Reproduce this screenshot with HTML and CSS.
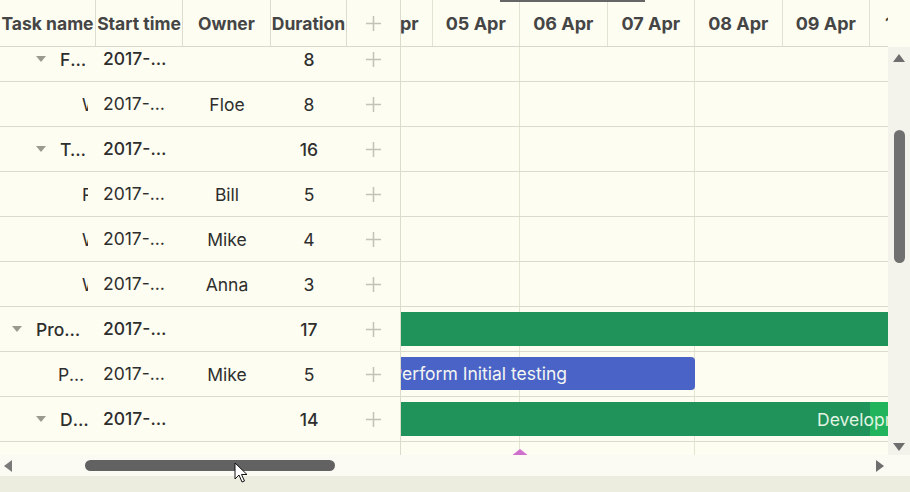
FILE: index.html
```html
<!DOCTYPE html>
<html lang="en">
<head>
    <meta charset="UTF-8">
    <meta name="viewport" content="width=device-width, initial-scale=1.0">
    <title>Gantt</title>
    <link rel="stylesheet" href="styles.css">
</head>
<body>
    <div class="gantt">
        <div class="main">
            <div class="grid">
                <div class="grid-head">
                    <div class="hcell">Task name</div>
                    <div class="hcell">Start time</div>
                    <div class="hcell">Owner</div>
                    <div class="hcell">Duration</div>
                    <div class="hcell add"><svg class="plus" viewBox="0 0 18 18"><path d="M9 1v16M1 9h16"/></svg></div>
                </div>
                <div class="grid-body">
                    <div class="rows">
                        <div class="row parent">
                            <div class="cell name lvl1"><span class="caret"></span><span class="txt">Finalize</span></div>
                            <div class="cell start">2017-04-02</div>
                            <div class="cell owner"></div>
                            <div class="cell dur">8</div>
                            <div class="cell add"><svg class="plus" viewBox="0 0 18 18"><path d="M9 1v16M1 9h16"/></svg></div>
                        </div>
                        <div class="row">
                            <div class="cell name lvl2 clip"><span class="leaf"></span><span class="txt">Write docs</span></div>
                            <div class="cell start">2017-04-02</div>
                            <div class="cell owner">Floe</div>
                            <div class="cell dur">8</div>
                            <div class="cell add"><svg class="plus" viewBox="0 0 18 18"><path d="M9 1v16M1 9h16"/></svg></div>
                        </div>
                        <div class="row parent">
                            <div class="cell name lvl1"><span class="caret"></span><span class="txt">Testing</span></div>
                            <div class="cell start">2017-04-03</div>
                            <div class="cell owner"></div>
                            <div class="cell dur">16</div>
                            <div class="cell add"><svg class="plus" viewBox="0 0 18 18"><path d="M9 1v16M1 9h16"/></svg></div>
                        </div>
                        <div class="row">
                            <div class="cell name lvl2 clip"><span class="leaf"></span><span class="txt">Review</span></div>
                            <div class="cell start">2017-04-03</div>
                            <div class="cell owner">Bill</div>
                            <div class="cell dur">5</div>
                            <div class="cell add"><svg class="plus" viewBox="0 0 18 18"><path d="M9 1v16M1 9h16"/></svg></div>
                        </div>
                        <div class="row">
                            <div class="cell name lvl2 clip"><span class="leaf"></span><span class="txt">Write tests</span></div>
                            <div class="cell start">2017-04-08</div>
                            <div class="cell owner">Mike</div>
                            <div class="cell dur">4</div>
                            <div class="cell add"><svg class="plus" viewBox="0 0 18 18"><path d="M9 1v16M1 9h16"/></svg></div>
                        </div>
                        <div class="row">
                            <div class="cell name lvl2 clip"><span class="leaf"></span><span class="txt">Wrap up</span></div>
                            <div class="cell start">2017-04-12</div>
                            <div class="cell owner">Anna</div>
                            <div class="cell dur">3</div>
                            <div class="cell add"><svg class="plus" viewBox="0 0 18 18"><path d="M9 1v16M1 9h16"/></svg></div>
                        </div>
                        <div class="row parent">
                            <div class="cell name lvl0"><span class="caret"></span><span class="txt">Production</span></div>
                            <div class="cell start">2017-04-02</div>
                            <div class="cell owner"></div>
                            <div class="cell dur">17</div>
                            <div class="cell add"><svg class="plus" viewBox="0 0 18 18"><path d="M9 1v16M1 9h16"/></svg></div>
                        </div>
                        <div class="row">
                            <div class="cell name lvl1"><span class="leaf"></span><span class="txt">Perform Initial testing</span></div>
                            <div class="cell start">2017-04-02</div>
                            <div class="cell owner">Mike</div>
                            <div class="cell dur">5</div>
                            <div class="cell add"><svg class="plus" viewBox="0 0 18 18"><path d="M9 1v16M1 9h16"/></svg></div>
                        </div>
                        <div class="row parent">
                            <div class="cell name lvl1"><span class="caret"></span><span class="txt">Development</span></div>
                            <div class="cell start">2017-04-03</div>
                            <div class="cell owner"></div>
                            <div class="cell dur">14</div>
                            <div class="cell add"><svg class="plus" viewBox="0 0 18 18"><path d="M9 1v16M1 9h16"/></svg></div>
                        </div>
                        <div class="row">
                            <div class="cell name lvl2"><span class="leaf"></span><span class="txt"></span></div>
                            <div class="cell start"></div>
                            <div class="cell owner"></div>
                            <div class="cell dur"></div>
                            <div class="cell add"></div>
                        </div>
                    </div>
                </div>
            </div>

            <div class="timeline">
                <div class="scale">
                    <div class="day">04 Apr</div>
                    <div class="day">05 Apr</div>
                    <div class="day">06 Apr</div>
                    <div class="day">07 Apr</div>
                    <div class="day">08 Apr</div>
                    <div class="day">09 Apr</div>
                    <div class="day">10 Apr</div>
                </div>
                <div class="tl-body">
                    <div class="rows">
                        <div class="trow"></div>
                        <div class="trow"></div>
                        <div class="trow"></div>
                        <div class="trow"></div>
                        <div class="trow"></div>
                        <div class="trow"></div>
                        <div class="trow">
                            <div class="bar project" style="left: -40px; width: 1000px;"></div>
                        </div>
                        <div class="trow">
                            <div class="bar task" style="left: -138px; width: 432px;">Perform Initial testing</div>
                        </div>
                        <div class="trow">
                            <div class="bar project light start" style="left: -40px; width: 1012px;">
                                <div class="progress" style="width: 509px;"></div>
                                <span class="label">Development</span>
                            </div>
                        </div>
                        <div class="trow">
                            <svg class="milestone" style="left: 104px;" viewBox="0 0 30 24"><path d="M15 0L30 12L15 24L0 12Z"/></svg>
                        </div>
                    </div>
                </div>
            </div>

            <div class="vscroll">
                <div class="vs-head"></div>
                <div class="vs-track">
                    <span class="arrow up"></span>
                    <div class="vs-space top"></div>
                    <div class="vs-thumb"></div>
                    <div class="vs-space"></div>
                    <span class="arrow down"></span>
                </div>
            </div>
        </div>

        <div class="hscroll">
            <span class="arrow left"></span>
            <div class="hs-thumb"></div>
            <div class="hs-space"></div>
            <span class="arrow right"></span>
        </div>
        <div class="footer"></div>

        <div class="top-mark"></div>
        <svg class="cursor" viewBox="0 0 14 22"><path d="M1 1L1 17L5 13L8 20L10.5 19L7.5 12.5L13 12.5Z"/></svg>
    </div>
</body>
</html>
```

FILE: styles.css
```css
body, html {
    margin: 0;
    padding: 0;
    background-color: #fdfdf1;
    color: #2e2e2e;
    font-family: 'Inter', 'Noto Sans', sans-serif;
    font-size: 17.5px;
    overflow: hidden;
}
.gantt {
    position: relative;
    width: 910px;
    height: 492px;
    display: flex;
    flex-direction: column;
}
.main {
    display: flex;
    height: 455px;
}

/* left grid */
.grid {
    width: 401px;
    flex: none;
    border-right: 1px solid #dcdccc;
    box-sizing: border-box;
    display: flex;
    flex-direction: column;
}
.grid-head, .row {
    display: grid;
    grid-template-columns: 96px 87px 88px 76px 53px;
}
.grid-head {
    height: 47px;
    border-bottom: 1px solid #d8d8cc;
    box-sizing: border-box;
}
.hcell {
    display: flex;
    align-items: center;
    justify-content: center;
    font-weight: 700;
    font-size: 17.5px;
    color: #454545;
    white-space: nowrap;
    border-right: 1px solid #dcdcd0;
    overflow: hidden;
}
.hcell.add {
    border-right: none;
}
.grid-body, .tl-body {
    flex: 1;
    overflow: hidden;
}
.rows {
    margin-top: -10px;
}
.row, .trow {
    height: 45px;
    border-bottom: 1px solid #dadace;
    box-sizing: border-box;
}
.cell {
    display: flex;
    align-items: center;
    justify-content: center;
    white-space: nowrap;
    overflow: hidden;
}
.row.parent .cell {
    font-weight: 500;
}
.cell.name {
    justify-content: flex-start;
    padding-right: 8px;
}
.cell.name .txt {
    overflow: hidden;
    text-overflow: ellipsis;
    min-width: 0;
}
.cell.name.clip .txt {
    text-overflow: clip;
}
.lvl0 { padding-left: 12px; }
.lvl1 { padding-left: 36px; }
.lvl2 { padding-left: 60px; }
.caret {
    flex: none;
    width: 24px;
    height: 6px;
    position: relative;
}
.caret::before {
    content: "";
    position: absolute;
    left: 0;
    top: 0;
    border-left: 5px solid transparent;
    border-right: 5px solid transparent;
    border-top: 6px solid #9a9a90;
}
.leaf {
    flex: none;
    width: 22px;
}
.cell.start {
    display: block;
    padding: 0 14px 0 7px;
    line-height: 44px;
    text-overflow: ellipsis;
}
.plus {
    width: 17px;
    height: 17px;
    fill: none;
    stroke: #c2c2b8;
    stroke-width: 1.6;
}

/* timeline */
.timeline {
    width: 487px;
    flex: none;
    display: flex;
    flex-direction: column;
    overflow: hidden;
}
.scale {
    height: 47px;
    flex: none;
    display: flex;
    margin-left: -56px;
    border-bottom: 1px solid #d8d8cc;
    box-sizing: border-box;
}
.day {
    flex: none;
    width: 87.5px;
    box-sizing: border-box;
    border-right: 1px solid #e2e2d2;
    display: flex;
    align-items: center;
    justify-content: center;
    font-weight: 700;
    font-size: 18px;
    color: #454545;
    white-space: nowrap;
}
.tl-body {
    background: repeating-linear-gradient(90deg, transparent 0 86.5px, #e4e4d2 86.5px 87.5px);
    background-position: -56px 0;
}
.trow {
    position: relative;
}
.bar {
    position: absolute;
    top: 5px;
    height: 34px;
    box-sizing: border-box;
    color: #f4f6f2;
    display: flex;
    align-items: center;
    justify-content: center;
    white-space: nowrap;
    overflow: hidden;
}
.bar.start {
    justify-content: flex-start;
}
.bar.project {
    background-color: #1f935a;
}
.bar.project.light {
    background-color: #22b35d;
}
.bar.task {
    background-color: #4a63c6;
    border-radius: 4px;
    height: 33px;
}
.progress {
    position: absolute;
    left: 0;
    top: 0;
    bottom: 0;
    background-color: #1f935a;
}
.label {
    position: relative;
    margin-left: 456px;
    color: #e2f4e2;
}
.milestone {
    position: absolute;
    top: 7px;
    width: 30px;
    height: 24px;
    fill: #d070cc;
}

/* scrollbars */
.vscroll {
    width: 22px;
    flex: none;
    display: flex;
    flex-direction: column;
}
.vs-head {
    height: 47px;
    flex: none;
}
.vs-track {
    flex: 1;
    background-color: #f3f3ec;
    display: flex;
    flex-direction: column;
    align-items: center;
    padding: 7px 0 4px;
    box-sizing: border-box;
}
.vs-space {
    flex: 1;
}
.vs-space.top {
    flex: none;
    height: 68px;
}
.vs-thumb {
    width: 11px;
    height: 133px;
    border-radius: 6px;
    background-color: #707070;
}
.arrow {
    width: 0;
    height: 0;
    flex: none;
}
.arrow.up {
    border-left: 6px solid transparent;
    border-right: 6px solid transparent;
    border-bottom: 8px solid #6e6e6e;
}
.arrow.down {
    border-left: 6px solid transparent;
    border-right: 6px solid transparent;
    border-top: 8px solid #6e6e6e;
}
.hscroll {
    height: 21px;
    flex: none;
    display: flex;
    align-items: center;
    padding: 0 26px 0 4px;
    background-color: #fbfbf3;
}
.arrow.left {
    border-top: 6px solid transparent;
    border-bottom: 6px solid transparent;
    border-right: 8px solid #7a7a7a;
}
.arrow.right {
    border-top: 6px solid transparent;
    border-bottom: 6px solid transparent;
    border-left: 8px solid #6e6e6e;
}
.hs-thumb {
    margin-left: 73px;
    width: 250px;
    height: 11px;
    border-radius: 6px;
    background-color: #626262;
}
.hs-space {
    flex: 1;
}
.footer {
    flex: 1;
    background-color: #ececdf;
}
.top-mark {
    position: absolute;
    left: 500px;
    top: 0;
    width: 145px;
    height: 2px;
    background-color: #666;
}
.cursor {
    position: absolute;
    left: 234px;
    top: 462px;
    width: 14px;
    height: 22px;
    fill: #fff;
    stroke: #111;
    stroke-width: 1;
}
```
